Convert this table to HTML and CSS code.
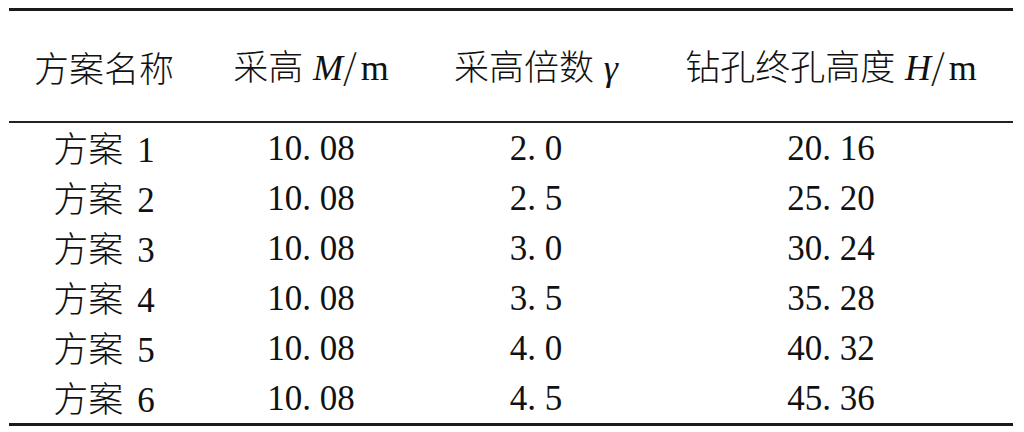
FILE: index.html
```html
<!DOCTYPE html>
<html lang="zh-CN">
<head>
<meta charset="utf-8">
<link rel="stylesheet" href="styles.css">
</head>
<body>
<div class="wrap">
<table class="tbl">
  <colgroup>
    <col class="c1"><col class="c2"><col class="c3"><col class="c4">
  </colgroup>
  <thead>
    <tr>
      <th>方案名称</th>
      <th>采高 <i class="v">M</i>/<span class="u">m</span></th>
      <th>采高倍数 <i class="v">γ</i></th>
      <th>钻孔终孔高度 <i class="v">H</i>/<span class="u">m</span></th>
    </tr>
  </thead>
  <tbody>
    <tr><td>方案<span class="n idx">1</span></td><td class="n">10<span class="pt">.</span>08</td><td class="n">2<span class="pt">.</span>0</td><td class="n">20<span class="pt">.</span>16</td></tr>
    <tr><td>方案<span class="n idx">2</span></td><td class="n">10<span class="pt">.</span>08</td><td class="n">2<span class="pt">.</span>5</td><td class="n">25<span class="pt">.</span>20</td></tr>
    <tr><td>方案<span class="n idx">3</span></td><td class="n">10<span class="pt">.</span>08</td><td class="n">3<span class="pt">.</span>0</td><td class="n">30<span class="pt">.</span>24</td></tr>
    <tr><td>方案<span class="n idx">4</span></td><td class="n">10<span class="pt">.</span>08</td><td class="n">3<span class="pt">.</span>5</td><td class="n">35<span class="pt">.</span>28</td></tr>
    <tr><td>方案<span class="n idx">5</span></td><td class="n">10<span class="pt">.</span>08</td><td class="n">4<span class="pt">.</span>0</td><td class="n">40<span class="pt">.</span>32</td></tr>
    <tr><td>方案<span class="n idx">6</span></td><td class="n">10<span class="pt">.</span>08</td><td class="n">4<span class="pt">.</span>5</td><td class="n">45<span class="pt">.</span>36</td></tr>
  </tbody>
</table>
</div>
</body>
</html>
```

FILE: styles.css
```css
html, body {
  margin: 0;
  padding: 0;
  background: #ffffff;
}
.wrap {
  padding: 8px 0 0 9px;
}
.tbl {
  border-collapse: collapse;
  table-layout: fixed;
  width: 1004px;
  font-family: "Liberation Serif", "Noto Sans CJK SC", serif;
  font-size: 35px;
  line-height: 1;
  color: #111;
  border-top: 3px solid #1a1a1a;
  border-bottom: 3px solid #1a1a1a;
}
.c1 { width: 190px; }
.c2 { width: 224px; }
.c3 { width: 226px; }
.c4 { width: 364px; }
.tbl th {
  height: 110px;
  padding: 0;
  text-align: center;
  vertical-align: middle;
  white-space: nowrap;
  border-bottom: 2px solid #222;
  font-family: "Noto Sans CJK SC", "Liberation Serif", sans-serif;
  font-weight: 300;
  line-height: 1;
}
.tbl td {
  height: 50px;
  padding: 0;
  text-align: center;
  vertical-align: middle;
  white-space: nowrap;
  font-family: "Noto Sans CJK SC", sans-serif;
  font-weight: 300;
  line-height: 1;
}
.v {
  font-family: "Liberation Serif", serif;
  font-style: italic;
  font-weight: normal;
  font-size: 36px;
  margin-left: 2px;
}
.u {
  font-family: "Liberation Serif", serif;
  font-weight: normal;
  font-size: 36px;
  margin-left: 4px;
}
.n {
  font-family: "Liberation Serif", serif;
  font-weight: normal;
  font-size: 35px;
}
.tbl td.n {
  font-family: "Liberation Serif", serif;
  font-weight: normal;
}
.idx {
  margin-left: 14px;
}
.pt {
  margin-right: 0.25em;
}
```
